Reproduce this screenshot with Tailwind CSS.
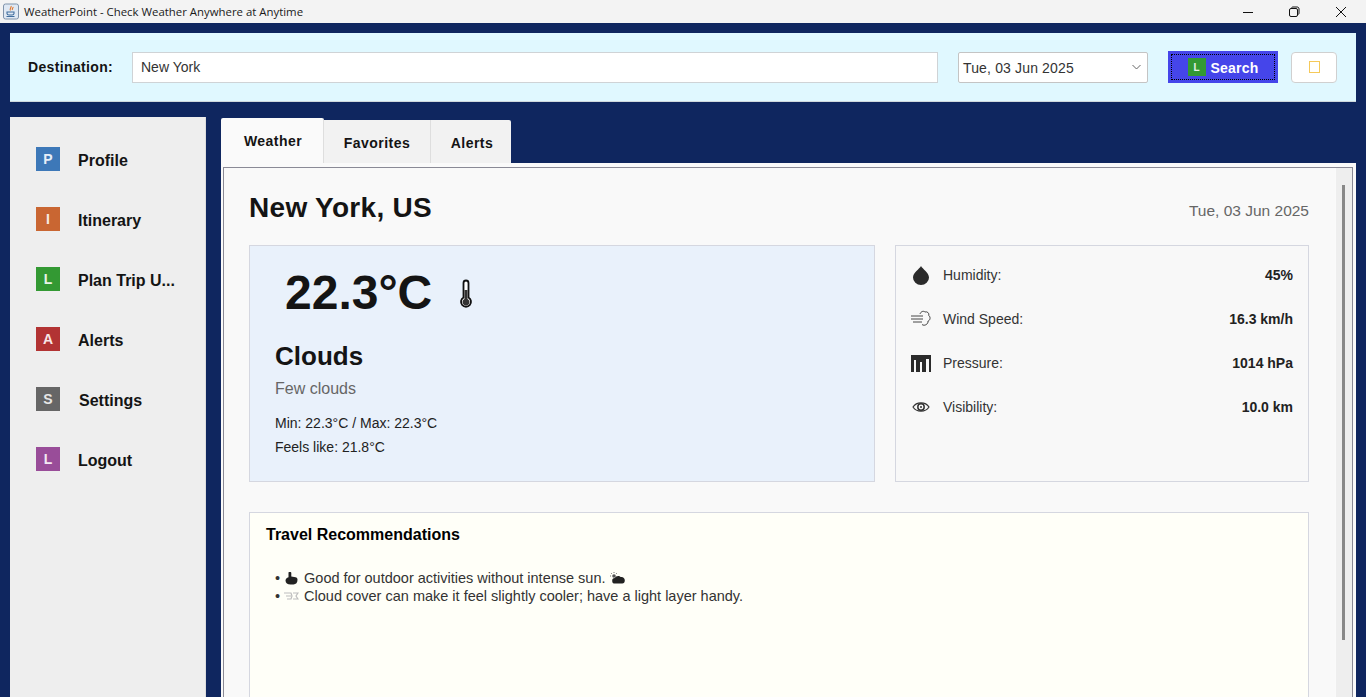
<!DOCTYPE html>
<html lang="en">
<head>
  <meta charset="UTF-8"/>
  <title>WeatherPoint</title>
  <script src="https://cdn.jsdelivr.net/npm/@tailwindcss/browser@4"></script>
</head>
<body class="h-[697px] w-[1366px] overflow-hidden bg-[#0f265f] font-['Liberation_Sans',sans-serif] text-[#141414]">

  <!-- Title bar -->
  <div class="flex h-[23px] items-center bg-[#f3f3f3] pl-[3px]">
    <svg class="h-[17px] w-[16px]" viewBox="0 0 16 17">
      <rect x="0.5" y="1" width="15" height="15" rx="2" fill="#dfe8f3" stroke="#7f93ab"/>
      <path d="M8 3c1 1.500-2 2.500-.5 4.500M10 4c.5 1-1.500 1.500-.5 3" fill="none" stroke="#e2762a" stroke-width="1.100"/>
      <path d="M4 9h7v1.500c0 1-1 1.500-2 1.500H6c-1 0-2-.5-2-1.500zM3.500 13.500h8" fill="none" stroke="#3f6d9e" stroke-width="1.100"/>
    </svg>
    <span class="ml-[5px] font-['Open_Sans',sans-serif] text-[11.4px] text-[#1a1a1a]">WeatherPoint - Check Weather Anywhere at Anytime</span>
    <div class="ml-auto flex items-center">
      <svg class="mr-[34px] h-[12px] w-[12px]" viewBox="0 0 12 12"><path d="M1 6.500h10" stroke="#111" stroke-width="1"/></svg>
      <svg class="mr-[35px] h-[12px] w-[12px]" viewBox="0 0 12 12"><rect x="1.500" y="2.500" width="8" height="8" rx="1.500" fill="none" stroke="#111"/><path d="M3.500 2.500c0-1 .5-1.500 1.500-1.500h4c1.300 0 2 .7 2 2v4c0 1-.5 1.500-1.500 1.500" fill="none" stroke="#111"/></svg>
      <svg class="mr-[19px] h-[12px] w-[12px]" viewBox="0 0 12 12"><path d="M1 1l10 10M11 1L1 11" stroke="#111"/></svg>
    </div>
  </div>

  <!-- Search bar -->
  <div class="mx-[10px] mt-[10px] flex h-[69px] items-center border-b border-[#cfd8dc] bg-[#e0f8ff] pl-[18px]">
    <label class="w-[104px] text-[14px] font-bold tracking-[0.35px]">Destination:</label>
    <div class="flex h-[31px] w-[806px] items-center border border-[#cfd3d6] bg-white pl-2 text-[14px] text-[#333]">New York</div>
    <div class="ml-5 flex h-[31px] w-[190px] items-center justify-between rounded-[2px] border border-[#c4c4c4] bg-white pl-[4px] pr-[5px] text-[14px] tracking-[0.15px] text-[#333]">
      <span class="pt-[2px]">Tue, 03 Jun 2025</span>
      <svg class="h-[8px] w-[11px]" viewBox="0 0 11 8"><path d="M1.500 2l4 4 4-4" fill="none" stroke="#666" stroke-width="1"/></svg>
    </div>
    <button class="ml-5 flex h-[32px] w-[110px] items-center justify-center bg-[#4545ea] p-[3px]">
      <span class="flex h-full w-full items-center justify-center gap-[5px] border border-dotted border-black text-[14px] font-bold tracking-[0.2px] text-white">
        <span class="flex h-[18px] w-[18px] items-center justify-center bg-[#339933] text-[10px] font-bold text-[#e8f3e8]">L</span>
        <span class="pt-[2px]">Search</span>
      </span>
    </button>
    <button class="ml-[13px] flex h-[31px] w-[46px] items-center justify-center rounded-[4px] border border-[#d0d0d0] bg-white">
      <span class="h-[12px] w-[11px] border border-[#f5c95a]"></span>
    </button>
  </div>

  <div class="mx-[10px] mt-[15px] flex h-[580px]">
    <!-- Sidebar -->
    <nav class="w-[196px] shrink-0 border-r border-[#dddddd] bg-[#eeeeee] pl-[26px] pt-[30px] text-[16px] font-bold">
      <div class="flex h-[24px] items-center"><span class="flex h-[24px] w-[24px] items-center justify-center bg-[#3d78b8] text-[14px] font-bold text-[#e6eef7]">P</span><span class="ml-[18px] mt-[4px]">Profile</span></div>
      <div class="mt-[36px] flex h-[24px] items-center"><span class="flex h-[24px] w-[24px] items-center justify-center bg-[#c96632] text-[14px] font-bold text-[#f8ebe3]">I</span><span class="ml-[18px] mt-[4px]">Itinerary</span></div>
      <div class="mt-[36px] flex h-[24px] items-center"><span class="flex h-[24px] w-[24px] items-center justify-center bg-[#339933] text-[14px] font-bold text-[#e8f3e8]">L</span><span class="ml-[18px] mt-[4px]">Plan Trip U...</span></div>
      <div class="mt-[36px] flex h-[24px] items-center"><span class="flex h-[24px] w-[24px] items-center justify-center bg-[#b23333] text-[14px] font-bold text-[#f7e6e6]">A</span><span class="ml-[18px] mt-[4px]">Alerts</span></div>
      <div class="mt-[36px] flex h-[24px] items-center"><span class="flex h-[24px] w-[24px] items-center justify-center bg-[#666666] text-[14px] font-bold text-[#e6e6e6]">S</span><span class="ml-[19px] mt-[4px]">Settings</span></div>
      <div class="mt-[36px] flex h-[24px] items-center"><span class="flex h-[24px] w-[24px] items-center justify-center bg-[#994d99] text-[14px] font-bold text-[#f3e8f3]">L</span><span class="ml-[18px] mt-[4px]">Logout</span></div>
    </nav>

    <main class="ml-[15px] flex min-w-0 flex-1 flex-col">
      <!-- Tabs -->
      <div class="flex h-[46px] items-end text-[14px] font-bold tracking-[0.45px]">
        <div class="flex h-[45px] w-[103px] items-center justify-center rounded-t-[2px] border-r border-[#dedede] bg-[#fafafa] pl-[2px] pt-[1px]">Weather</div>
        <div class="flex h-[43px] w-[107px] items-center justify-center border-r border-[#dedede] bg-[#f2f2f2] pt-[3px]">Favorites</div>
        <div class="flex h-[43px] w-[80px] items-center justify-center rounded-tr-[2px] bg-[#f2f2f2] pl-[2px] pt-[3px]">Alerts</div>
      </div>
      <!-- Tab panel -->
      <div class="flex-1 min-h-0 bg-[#fafafa] pl-[2px] pr-[3px] pt-[4px]">
        <div class="flex h-full border-l border-r border-t border-[#8a8a96]">
          <div class="min-w-0 flex-1 bg-[#f9f9f9] pl-[25px] pr-[26px]">
            <div class="flex h-[77px] items-center justify-between pt-[3px]">
              <h1 class="text-[28px] font-bold tracking-[0.3px]">New York, US</h1>
              <span class="mt-[6px] text-[15.5px] text-[#666]">Tue, 03 Jun 2025</span>
            </div>
            <div class="flex gap-5">
              <!-- Current weather -->
              <section class="h-[237px] w-[626px] border border-[#d5d7e0] bg-[#e9f1fb] pl-[25px]">
                <div class="flex h-[94px] items-center pl-[10px]">
                  <span class="text-[48px] font-bold">22.3°C</span>
                  <svg class="ml-[27px] mt-[2px] h-[30px] w-[14px]" viewBox="0 0 14 30">
                    <path d="M4.500 4a2.500 2.500 0 0 1 5 0v14.500a5 5 0 1 1-5 0z" fill="#fff" stroke="#111" stroke-width="1.800"/>
                    <path d="M5.500 11h3v9a3.500 3.500 0 1 1-3 0z" fill="#333"/>
                  </svg>
                </div>
                <h2 class="-mt-[2px] text-[26px] font-bold leading-[36px]">Clouds</h2>
                <p class="mt-[5px] text-[16px] leading-[20px] text-[#666]">Few clouds</p>
                <p class="mt-[12px] text-[14px] leading-[24px] text-[#222]">Min: 22.3°C / Max: 22.3°C</p>
                <p class="text-[14px] leading-[24px] text-[#222]">Feels like: 21.8°C</p>
              </section>
              <!-- Details -->
              <section class="h-[237px] flex-1 border border-[#d5d7e0] bg-[#f8f8f8] pl-[15px] pr-[15px] pt-[7px] text-[14px] text-[#333]">
                <div class="flex h-[44px] items-center">
                  <svg class="h-[20px] w-[20px]" viewBox="0 0 20 20"><path d="M10 1C11.500 4 18 7.500 18 12.500A8 7.500 0 0 1 2 12.500C2 7.500 8.500 4 10 1z" fill="#2b2b2b"/></svg>
                  <span class="ml-[12px]">Humidity:</span><b class="ml-auto text-[#222]">45%</b>
                </div>
                <div class="flex h-[44px] items-center">
                  <svg class="h-[20px] w-[20px]" viewBox="0 0 20 20"><path d="M0 7h12M0 10h12M2 13h9M9 5c.8-2.500 3.500-3.500 5-2 2-.8 4.500 1 3.800 3.500 2 1.500 1.500 5-.8 5.500 .5 3-3.500 5.500-6 3.500" fill="none" stroke="#333" stroke-width="0.900"/></svg>
                  <span class="ml-[12px]">Wind Speed:</span><b class="ml-auto text-[#222]">16.3 km/h</b>
                </div>
                <div class="flex h-[44px] items-center">
                  <svg class="h-[17px] w-[20px]" viewBox="0 0 20 17"><path d="M0 0h20v17H0z" fill="#2b2b2b"/><path d="M3 5h2v12H3zM9 7h2v10H9zM15 4h3v13h-3z" fill="#f8f8f8"/></svg>
                  <span class="ml-[12px]">Pressure:</span><b class="ml-auto text-[#222]">1014 hPa</b>
                </div>
                <div class="flex h-[44px] items-center">
                  <svg class="h-[20px] w-[20px]" viewBox="0 0 20 20"><path d="M2 10c3.500-5.500 12.500-5.500 16 0-3.500 5.500-12.500 5.500-16 0z" fill="none" stroke="#333" stroke-width="1.200"/><circle cx="10" cy="10" r="3.200" fill="none" stroke="#333" stroke-width="1.500"/><circle cx="10" cy="10" r="1" fill="#333"/></svg>
                  <span class="ml-[12px]">Visibility:</span><b class="ml-auto text-[#222]">10.0 km</b>
                </div>
              </section>
            </div>
            <!-- Recommendations -->
            <section class="mt-[30px] h-[185px] border-l border-r border-t border-[#d5d7e0] bg-[#fffff8] pl-[16px] pt-[12px]">
              <h3 class="text-[16px] font-bold leading-[20px] text-black">Travel Recommendations</h3>
              <ul class="mt-[24px] pl-[9px] text-[14.5px] leading-[18px] text-[#333]">
                <li class="flex items-center">•<svg class="ml-[4px] mr-[5px] h-[13px] w-[15px]" viewBox="0 0 15 13"><path d="M5 0h1.500c.5 0 .8.400.8 1v3.500l4.200.8c1.500.3 2 1.200 2 2.500 0 2.800-1.500 4.700-4 4.700H6.500C3.500 12.500 1.500 11 1.500 8.500c0-1.500 1.200-2.500 3-3.200V1C4.500.4 4.600 0 5 0z" fill="#222"/></svg>Good for outdoor activities without intense sun.<svg class="ml-[4px] h-[12px] w-[16px]" viewBox="0 0 16 12"><path d="M5 11.500a2.700 2.700 0 0 1-.2-5.400c.8-2.400 4.500-3 6-1 2-.5 4 1 4 3.200s-1 3.200-2.500 3.200z" fill="#222"/><circle cx="4" cy="4" r="1.800" fill="#555"/><path d="M4 0v1M0 4h1M1 1l.8.8M7 1l-.8.8" stroke="#555" stroke-width="0.800"/></svg></li>
                <li class="flex items-center">•<svg class="ml-[4px] mr-[5px] h-[12px] w-[15px]" viewBox="0 0 15 12"><path d="M0 3h7l1 3-1 3H3M9 3h5l-2 3 2 3H9" fill="none" stroke="#bdbdbd" stroke-width="1.200"/><path d="M2 6h5" stroke="#bdbdbd"/></svg>Cloud cover can make it feel slightly cooler; have a light layer handy.</li>
              </ul>
            </section>
          </div>
          <!-- Scrollbar -->
          <div class="w-[17px] shrink-0 border-l border-[#fafafa] bg-[#eeeeee] pl-[6px] pt-[17px]">
            <div class="h-[455px] w-[3px] bg-[#888888]"></div>
          </div>
        </div>
      </div>
    </main>
  </div>
</body>
</html>
